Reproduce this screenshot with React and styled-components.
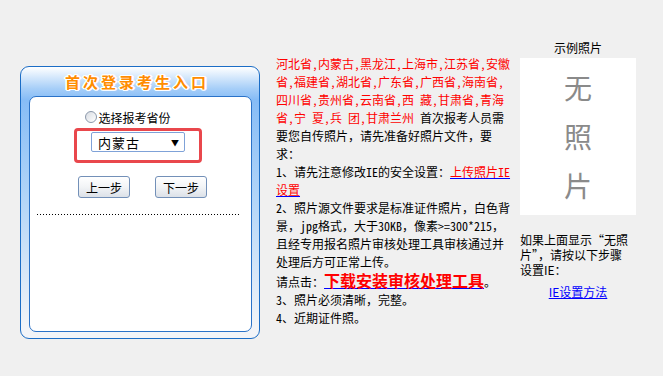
import React from 'react'
import styled, { createGlobalStyle } from 'styled-components'

const GlobalStyle = createGlobalStyle`
	body {
		margin: 0;
		background: #f0f0f0;
		font-family: "Noto Sans Mono CJK SC", "Noto Sans CJK SC", sans-serif;
		font-size: 12px;
		color: #000;
	}
`

const Page = styled.div`
	display: flex;
	align-items: flex-start;
	padding: 36px 0 0 20px;
`

const LoginBox = styled.div`
	width: 238px;
	height: 271px;
	margin-top: 30px;
	border: 1px solid #1b6dc6;
	border-radius: 9px;
	background: linear-gradient(#ffffff 0%, #a6cef8 8%, #86bcf6 12%, #b4d6f8 50%, #f2f4f8 96%);
	display: flex;
	flex-direction: column;
`

const BoxTitle = styled.div`
	height: 29px;
	display: flex;
	align-items: center;
	justify-content: center;
	padding-right: 6px;
	font-family: "Noto Sans CJK SC", sans-serif;
	font-size: 15px;
	font-weight: 700;
	letter-spacing: 3px;
	color: #ff8c00;
	text-shadow: 1px 0 #fff, -1px 0 #fff, 0 1px #fff, 0 -1px #fff, 1px 1px #fff, -1px -1px #fff,
		1px -1px #fff, -1px 1px #fff, 2px 0 #fff, -2px 0 #fff;
`

const BoxBody = styled.div`
	flex: 1;
	margin: 0 7px 6px 8px;
	border: 1px solid #2a72c8;
	border-radius: 7px;
	background: #ffffff;
	display: flex;
	flex-direction: column;
	align-items: center;
	padding-top: 12px;
`

const RadioRow = styled.label`
	display: flex;
	align-items: center;
	height: 16px;
	margin-right: 25px;
	font-family: "Noto Sans CJK SC", sans-serif;
	font-size: 12px;
`

const Radio = styled.span`
	width: 10px;
	height: 10px;
	border: 1px solid #8b98ab;
	border-radius: 50%;
	background: linear-gradient(135deg, #d8dce2, #ffffff);
	margin-right: 1px;
`

const Highlight = styled.div`
	width: 122px;
	height: 28px;
	margin: 3px 5px 0 0;
	border: 3px solid #e9474c;
	border-radius: 4px;
	display: flex;
	justify-content: center;
	padding-top: 1px;
	box-sizing: content-box;
`

const Select = styled.div`
	width: 94px;
	height: 20px;
	border: 1px solid #7fa2d8;
	border-radius: 2px;
	background: #fff;
	display: flex;
	align-items: center;
	justify-content: space-between;
	padding: 0 5px 0 6px;
	box-sizing: border-box;
	font-family: "Noto Sans CJK SC", sans-serif;
	font-size: 13px;
	letter-spacing: 1px;
`

const Arrow = styled.span`
	font-size: 8px;
	letter-spacing: 0;
`

const ButtonRow = styled.div`
	display: flex;
	gap: 25px;
	margin: 13px 0 0 4px;
`

const Button = styled.button`
	width: 52px;
	height: 22px;
	padding: 0;
	border: 1px solid #7390b8;
	border-radius: 3px;
	background: linear-gradient(#ffffff, #f2f4f6 50%, #dce1e8);
	font-family: "Noto Sans CJK SC", sans-serif;
	font-size: 12px;
	color: #000;
`

const Dots = styled.div`
	align-self: stretch;
	height: 1px;
	margin: 16px 11px 0 7px;
	background: repeating-linear-gradient(to right, #000 0 1px, transparent 1px 3px);
`

const Notice = styled.div`
	width: 238px;
	margin: 19px 0 0 16px;
	line-height: 18px;
`

const Red = styled.span`
	color: #ff0000;
`

const RedLink = styled.a`
	color: #ff0000;
	text-decoration: underline;
	text-decoration-color: #0000ff;
	font-size: ${(p) => (p.$big ? '16px' : '12px')};
	font-weight: ${(p) => (p.$big ? 700 : 400)};
	font-family: ${(p) => (p.$big ? '"Noto Sans CJK SC", sans-serif' : 'inherit')};
`

const Sample = styled.div`
	width: 116px;
	margin: 4px 0 0 6px;
	font-family: "Noto Sans CJK SC", sans-serif;
`

const Caption = styled.div`
	text-align: center;
	line-height: 16px;
`

const Photo = styled.div`
	height: 157px;
	margin-top: 2px;
	background: #ffffff;
	display: flex;
	flex-direction: column;
	align-items: center;
	justify-content: center;
	font-size: 28px;
	line-height: 49px;
	color: #8a8a8a;
`

const Hint = styled.div`
	margin-top: 17px;
	padding-right: 6px;
	line-height: 15px;
`

const HelpLink = styled.a`
	display: block;
	margin-top: 7px;
	text-align: center;
	line-height: 15px;
	color: #0000ff;
	text-decoration: underline;
`

const provinces =
	'河北省,内蒙古,黑龙江,上海市,江苏省,安徽省,福建省,湖北省,广东省,广西省,海南省,四川省,贵州省,云南省,西 藏,甘肃省,青海省,宁 夏,兵 团,甘肃兰州'

export default function App() {
	return (
		<>
			<GlobalStyle />
			<Page>
				<LoginBox>
					<BoxTitle>首次登录考生入口</BoxTitle>
					<BoxBody>
						<RadioRow>
							<Radio />
							选择报考省份
						</RadioRow>
						<Highlight>
							<Select>
								内蒙古
								<Arrow>▼</Arrow>
							</Select>
						</Highlight>
						<ButtonRow>
							<Button>上一步</Button>
							<Button>下一步</Button>
						</ButtonRow>
						<Dots />
					</BoxBody>
				</LoginBox>

				<Notice>
					<Red>{provinces}</Red> 首次报考人员需要您自传照片，请先准备好照片文件，要求：
					<br />
					1、请先注意修改IE的安全设置：<RedLink href="#">上传照片IE设置</RedLink>
					<br />
					2、照片源文件要求是标准证件照片，白色背景，jpg格式，大于30KB，像素&gt;=300*215，且经专用报名照片审核处理工具审核通过并处理后方可正常上传。
					<br />
					请点击：<RedLink href="#" $big>下载安装审核处理工具</RedLink>。
					<br />
					3、照片必须清晰，完整。
					<br />
					4、近期证件照。
				</Notice>

				<Sample>
					<Caption>示例照片</Caption>
					<Photo>
						<span>无</span>
						<span>照</span>
						<span>片</span>
					</Photo>
					<Hint>如果上面显示“无照片”，请按以下步骤设置IE：</Hint>
					<HelpLink href="#">IE设置方法</HelpLink>
				</Sample>
			</Page>
		</>
	)
}
